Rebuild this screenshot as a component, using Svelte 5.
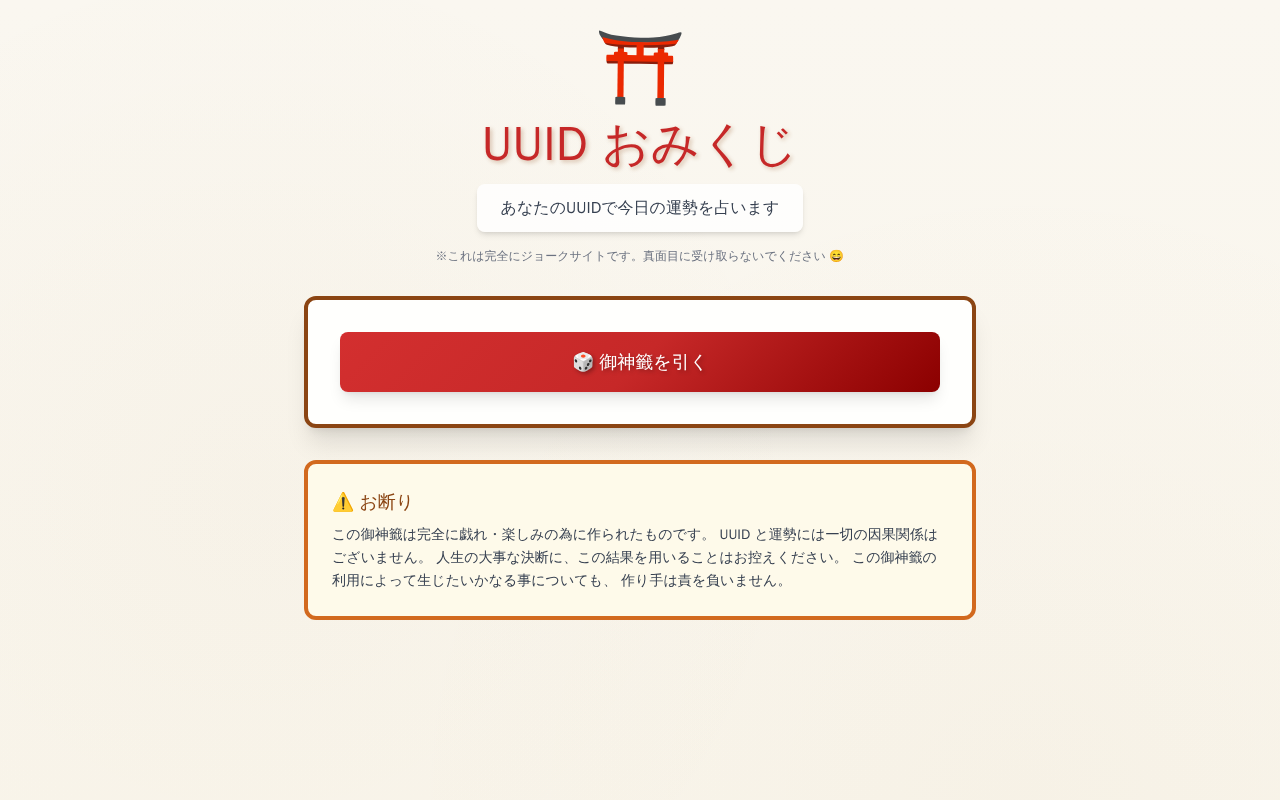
<script lang="ts">
  let drawing = $state(false);
</script>

<div class="page" lang="ja">
  <main>
    <header>
      <div class="torii">⛩️</div>
      <h1>UUID おみくじ</h1>
      <p class="lead">あなたのUUIDで今日の運勢を占います</p>
      <p class="joke">※これは完全にジョークサイトです。真面目に受け取らないでください 😄</p>
    </header>

    <section class="card">
      <button disabled={drawing}>🎲 御神籤を引く</button>
    </section>

    <section class="notice">
      <h3>⚠️ お断り</h3>
      <p>
        この御神籤は完全に戯れ・楽しみの為に作られたものです。 UUID と運勢には一切の因果関係はございません。
        人生の大事な決断に、この結果を用いることはお控えください。 この御神籤の利用によって生じたいかなる事についても、
        作り手は責を負いません。
      </p>
    </section>
  </main>
</div>

<style>
  :global(body) {
    margin: 0;
  }

  .page {
    min-height: 100vh;
    box-sizing: border-box;
    font-family: 'WenQuanYi Zen Hei', 'Noto Sans CJK JP', sans-serif;
    background:
      radial-gradient(circle at 20% 62%, rgba(139, 90, 19, 0.025) 0%, transparent 50%),
      radial-gradient(circle at 80% 100%, rgba(139, 90, 19, 0.025) 0%, transparent 50%),
      linear-gradient(180deg, #faf7f0 0%, #f9f5eb 100%);
  }

  main {
    width: 672px;
    margin: 0 auto;
    padding-top: 16px;
  }

  header {
    text-align: center;
    margin-bottom: 32px;
  }

  h1, h3, p {
    margin: 0;
    font-weight: 400;
  }

  .torii {
    font-size: 72px;
    line-height: 104px;
    transform: rotate(0.5deg);
  }

  h1 {
    font-size: 48px;
    line-height: 48px;
    color: #c62828;
    text-shadow: 2px 2px 4px rgba(139, 69, 19, 0.3);
  }

  .lead {
    width: fit-content;
    margin: 16px auto;
    padding: 12px 24px;
    line-height: 24px;
    background: rgba(255, 255, 255, 0.8);
    border-radius: 8px;
    color: #374151;
    box-shadow: 0 4px 6px -1px rgba(0, 0, 0, 0.1), 0 2px 4px -2px rgba(0, 0, 0, 0.1);
  }

  .joke {
    font-size: 12px;
    line-height: 16px;
    color: #6b7280;
  }

  .card {
    padding: 32px;
    background: #fffffd;
    border: 4px solid #8b4513;
    border-radius: 12px;
    box-shadow: 0 20px 25px -5px rgba(0, 0, 0, 0.1), 0 8px 10px -6px rgba(0, 0, 0, 0.1);
  }

  button {
    display: block;
    width: 100%;
    height: 60px;
    border: 0;
    border-radius: 8px;
    font: 18px/28px 'WenQuanYi Zen Hei', 'Noto Sans CJK JP', sans-serif;
    color: #fff;
    background: linear-gradient(135deg, #d32f2f 0%, #c62828 50%, #8b0000 100%);
    text-shadow: 2px 2px 4px rgba(0, 0, 0, 0.3);
    box-shadow: 0 10px 15px -3px rgba(0, 0, 0, 0.1), 0 4px 6px -4px rgba(0, 0, 0, 0.1);
  }

  .notice {
    margin-top: 32px;
    padding: 24px;
    background: #fefaea;
    border: 4px solid #d2691e;
    border-radius: 12px;
  }

  h3 {
    font-size: 18px;
    line-height: 28px;
    color: #8b4513;
    margin-bottom: 8px;
  }

  .notice p {
    font-size: 14px;
    line-height: 22.75px;
    color: #374151;
  }
</style>
